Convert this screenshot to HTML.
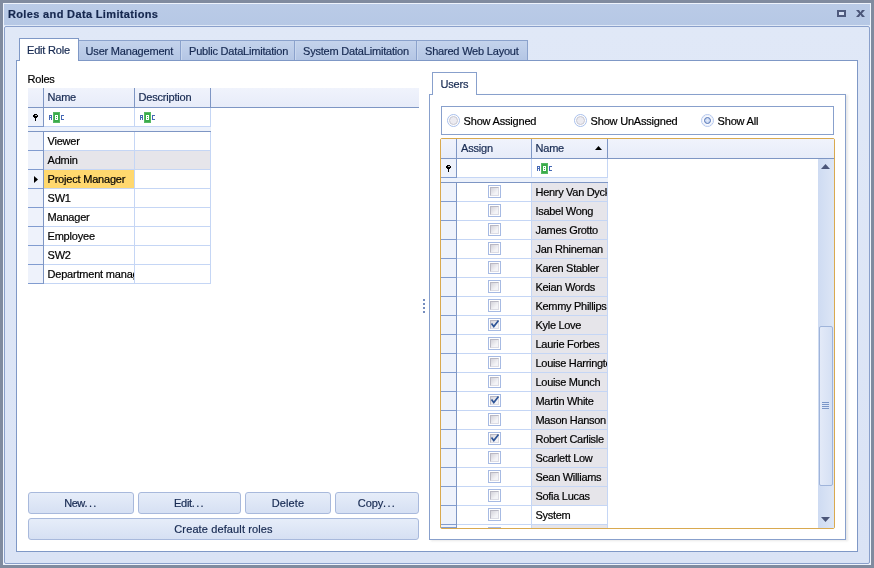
<!DOCTYPE html><html><head><meta charset="utf-8"><title>Roles and Data Limitations</title><style>
html,body{margin:0;padding:0;}
body{width:874px;height:568px;overflow:hidden;background:#808b9f;position:relative;font-family:"Liberation Sans",sans-serif;font-size:11px;color:#000;-webkit-text-stroke:0.2px;}
div{position:absolute;box-sizing:border-box;}
.t{white-space:nowrap;line-height:13px;height:13px;letter-spacing:-0.2px;}
.n{color:#172a52;}
.hdr{background:linear-gradient(#f0f3fc,#e7ecf9);}
.ind{background:#eef2fb;border-bottom:1px solid #819cd0;}
.cell{border-right:1px solid #c5d6f5;border-bottom:1px solid #c5d6f5;background:#fff;overflow:hidden;}
.g{background:#e6e5ea;}
.btn{border:1px solid #a8b9dc;border-radius:3px;background:linear-gradient(#e6edf9,#d6e0f3);text-align:center;line-height:20px;color:#172a52;letter-spacing:-0.2px;}
.cb{width:13px;height:13px;border:1px solid #a6bae3;background:#fff;}
.cb i{position:absolute;left:1px;top:1px;width:9px;height:9px;background:linear-gradient(135deg,#d4d3da,#f4f4f7 70%);border-top:1px solid #b9b8c3;border-left:1px solid #b9b8c3;border-right:1px solid #dcdce4;border-bottom:1px solid #dcdce4;box-sizing:border-box;}
.rd{width:13px;height:13px;border-radius:50%;border:1px solid #a9bde6;background:#fff;}
.rd i{position:absolute;left:1px;top:1px;width:9px;height:9px;border-radius:50%;background:radial-gradient(circle at 60% 60%,#f3f2f6,#dcdbe2);border:1px solid #c3c2cd;box-sizing:border-box;}
svg{position:absolute;overflow:visible;}
</style></head><body><div id="w" style="left:0;top:0;width:874px;height:568px;will-change:transform;">
<div style="left:3px;top:3px;width:868px;height:562px;background:#eef3fc;"></div>
<div style="left:4px;top:4px;width:866px;height:22px;background:linear-gradient(#bacbe7,#b6c8e5);"></div>
<div style="left:4px;top:25px;width:866px;height:1px;background:#dfe8f6;"></div>
<div class="t" style="left:8px;top:8px;font-weight:bold;color:#15274e;letter-spacing:0.35px;">Roles and Data Limitations</div>
<div style="left:837px;top:10px;width:9px;height:7px;border:2px solid #4e5a7d;background:#d3def2;"></div>
<svg style="left:856px;top:10px" width="9" height="7" viewBox="0 0 9 7"><path d="M0 0h3l1.5 2.2L6 0h3L5.9 3.5 9 7H6L4.5 4.8 3 7H0l3.1-3.5z" fill="#4b5679"/></svg>
<div style="left:4px;top:26px;width:866px;height:538px;background:linear-gradient(#e0e8f7,#dae3f5);border:1px solid #8aa0cb;border-radius:2px;"></div>
<div style="left:79px;top:40px;width:449px;height:21px;background:linear-gradient(#c4d3ec,#b3c5e4);border-top:1px solid #8ba2cc;border-right:1px solid #8ba2cc;"></div>
<div style="left:180px;top:41px;width:1px;height:19px;background:#8ba2cc;"></div>
<div style="left:181px;top:41px;width:1px;height:19px;background:#c9d7ee;"></div>
<div class="t n" style="left:85.6px;top:45px;">User Management</div>
<div style="left:294px;top:41px;width:1px;height:19px;background:#8ba2cc;"></div>
<div style="left:295px;top:41px;width:1px;height:19px;background:#c9d7ee;"></div>
<div class="t n" style="left:189px;top:45px;">Public DataLimitation</div>
<div style="left:416px;top:41px;width:1px;height:19px;background:#8ba2cc;"></div>
<div style="left:417px;top:41px;width:1px;height:19px;background:#c9d7ee;"></div>
<div class="t n" style="left:303px;top:45px;">System DataLimitation</div>
<div class="t n" style="left:425px;top:45px;">Shared Web Layout</div>
<div style="left:16px;top:60px;width:842px;height:492px;background:#fff;border:1px solid #7f98c6;"></div>
<div style="left:19px;top:38px;width:60px;height:23px;background:#fff;border:1px solid #7f98c6;border-bottom:none;"></div>
<div class="t n" style="left:27px;top:44px;">Edit Role</div>
<div class="t" style="left:27.5px;top:73px;">Roles</div>
<div class="hdr" style="left:28px;top:88px;width:391px;height:19px;"></div>
<div style="left:28px;top:107px;width:391px;height:1px;background:#7e96c4;"></div>
<div style="left:43px;top:88px;width:1px;height:19px;background:#7e96c4;"></div>
<div style="left:134px;top:88px;width:1px;height:19px;background:#7e96c4;"></div>
<div style="left:210px;top:88px;width:1px;height:19px;background:#7e96c4;"></div>
<div class="t n" style="left:47.5px;top:91px;">Name</div>
<div class="t n" style="left:138.5px;top:91px;">Description</div>
<div class="ind" style="left:28px;top:108px;width:15px;height:19px;"></div>
<div style="left:43px;top:108px;width:1px;height:19px;background:#7e96c4;"></div>
<div class="cell" style="left:44px;top:108px;width:91px;height:19px;"></div>
<div class="cell" style="left:135px;top:108px;width:76px;height:19px;"></div>
<div style="left:28px;top:127px;width:183px;height:4px;background:#edf2fb;"></div>
<div style="left:28px;top:131px;width:183px;height:1px;background:#7e96c4;"></div>
<svg style="left:33px;top:114px" width="5" height="7" viewBox="0 0 5 7" shape-rendering="crispEdges"><path d="M1 0h3v1h1v2h-1v1h-1v3h-1v-3h-1v-1h-1v-2h1z" fill="#000"/><rect x="2" y="1" width="2" height="1" fill="#bbb"/></svg>
<svg style="left:49px;top:112px" width="15" height="11" viewBox="0 0 15 11" shape-rendering="crispEdges"><rect x="4" y="0" width="7" height="11" fill="#3aab4a"/><rect x="4.5" y="0.5" width="6" height="10" fill="none" stroke="#56b964" stroke-width="1" shape-rendering="auto"/><path d="M0 3h3v5h-1v-2h-1v2h-1zM1 4v1h1v-1z" fill="#4668b4"/><path d="M6 3h3v5h-3zM7 4v1h1v-1zM7 6v1h1v-1z" fill="#fff" fill-rule="evenodd"/><path d="M12 3h3v1h-2v3h2v1h-3z" fill="#4668b4"/></svg>
<svg style="left:140px;top:112px" width="15" height="11" viewBox="0 0 15 11" shape-rendering="crispEdges"><rect x="4" y="0" width="7" height="11" fill="#3aab4a"/><rect x="4.5" y="0.5" width="6" height="10" fill="none" stroke="#56b964" stroke-width="1" shape-rendering="auto"/><path d="M0 3h3v5h-1v-2h-1v2h-1zM1 4v1h1v-1z" fill="#4668b4"/><path d="M6 3h3v5h-3zM7 4v1h1v-1zM7 6v1h1v-1z" fill="#fff" fill-rule="evenodd"/><path d="M12 3h3v1h-2v3h2v1h-3z" fill="#4668b4"/></svg>
<div class="ind" style="left:28px;top:132px;width:15px;height:19px;"></div>
<div style="left:43px;top:132px;width:1px;height:19px;background:#7e96c4;"></div>
<div class="cell" style="left:44px;top:132px;width:91px;height:19px;"><div class="t" style="left:3.5px;top:3px">Viewer</div></div>
<div class="cell" style="left:135px;top:132px;width:76px;height:19px;"></div>
<div class="ind" style="left:28px;top:151px;width:15px;height:19px;"></div>
<div style="left:43px;top:151px;width:1px;height:19px;background:#7e96c4;"></div>
<div class="cell g" style="left:44px;top:151px;width:91px;height:19px;"><div class="t" style="left:3.5px;top:3px">Admin</div></div>
<div class="cell g" style="left:135px;top:151px;width:76px;height:19px;"></div>
<div class="ind" style="left:28px;top:170px;width:15px;height:19px;"></div>
<div style="left:43px;top:170px;width:1px;height:19px;background:#7e96c4;"></div>
<div class="cell" style="left:44px;top:170px;width:91px;height:19px;background:#ffd86e;"><div class="t" style="left:3.5px;top:3px">Project Manager</div></div>
<div class="cell" style="left:135px;top:170px;width:76px;height:19px;"></div>
<div class="ind" style="left:28px;top:189px;width:15px;height:19px;"></div>
<div style="left:43px;top:189px;width:1px;height:19px;background:#7e96c4;"></div>
<div class="cell" style="left:44px;top:189px;width:91px;height:19px;"><div class="t" style="left:3.5px;top:3px">SW1</div></div>
<div class="cell" style="left:135px;top:189px;width:76px;height:19px;"></div>
<div class="ind" style="left:28px;top:208px;width:15px;height:19px;"></div>
<div style="left:43px;top:208px;width:1px;height:19px;background:#7e96c4;"></div>
<div class="cell" style="left:44px;top:208px;width:91px;height:19px;"><div class="t" style="left:3.5px;top:3px">Manager</div></div>
<div class="cell" style="left:135px;top:208px;width:76px;height:19px;"></div>
<div class="ind" style="left:28px;top:227px;width:15px;height:19px;"></div>
<div style="left:43px;top:227px;width:1px;height:19px;background:#7e96c4;"></div>
<div class="cell" style="left:44px;top:227px;width:91px;height:19px;"><div class="t" style="left:3.5px;top:3px">Employee</div></div>
<div class="cell" style="left:135px;top:227px;width:76px;height:19px;"></div>
<div class="ind" style="left:28px;top:246px;width:15px;height:19px;"></div>
<div style="left:43px;top:246px;width:1px;height:19px;background:#7e96c4;"></div>
<div class="cell" style="left:44px;top:246px;width:91px;height:19px;"><div class="t" style="left:3.5px;top:3px">SW2</div></div>
<div class="cell" style="left:135px;top:246px;width:76px;height:19px;"></div>
<div class="ind" style="left:28px;top:265px;width:15px;height:19px;"></div>
<div style="left:43px;top:265px;width:1px;height:19px;background:#7e96c4;"></div>
<div class="cell" style="left:44px;top:265px;width:91px;height:19px;"><div class="t" style="left:3.5px;top:3px">Department manager</div></div>
<div class="cell" style="left:135px;top:265px;width:76px;height:19px;"></div>
<svg style="left:34px;top:176px" width="4" height="7" viewBox="0 0 4 7"><path d="M0 0l4 3.5L0 7z" fill="#000"/></svg>
<div class="btn" style="left:28px;top:492px;width:106px;height:22px;"><span style="letter-spacing:-0.6px">New</span><span style="letter-spacing:1.3px">...</span></div>
<div class="btn" style="left:138px;top:492px;width:103px;height:22px;"><span style="letter-spacing:-0.3px">Edit</span><span style="letter-spacing:1.3px">...</span></div>
<div class="btn" style="left:245px;top:492px;width:86px;height:22px;"><span style="letter-spacing:0.1px">Delete</span></div>
<div class="btn" style="left:335px;top:492px;width:84px;height:22px;"><span style="letter-spacing:-0.1px">Copy</span><span style="letter-spacing:1.3px">...</span></div>
<div class="btn" style="left:28px;top:518px;width:391px;height:22px;letter-spacing:0.12px;">Create default roles</div>
<div style="left:423px;top:299px;width:2px;height:2px;background:#758dbe;"></div>
<div style="left:423px;top:303px;width:2px;height:2px;background:#758dbe;"></div>
<div style="left:423px;top:307px;width:2px;height:2px;background:#758dbe;"></div>
<div style="left:423px;top:311px;width:2px;height:2px;background:#758dbe;"></div>
<div style="left:429px;top:94px;width:417px;height:446px;background:#fff;border:1px solid #88a0cc;box-shadow:2px 1px 2px rgba(120,120,120,0.18);"></div>
<div style="left:432px;top:72px;width:45px;height:23px;background:#fff;border:1px solid #88a0cc;border-bottom:none;"></div>
<div class="t n" style="left:440.5px;top:78px;">Users</div>
<div style="left:441px;top:106px;width:393px;height:29px;border:1px solid #88a0cc;background:#fff;"></div>
<svg style="left:447px;top:114px" width="13" height="13" viewBox="0 0 13 13"><circle cx="6.5" cy="6.5" r="6" fill="#fff" stroke="#a9c0ec"/><circle cx="6.5" cy="6.5" r="4" fill="#ecebf1" stroke="#c6c6d0"/></svg>
<div class="t" style="left:463.6px;top:115px;">Show Assigned</div>
<svg style="left:574px;top:114px" width="13" height="13" viewBox="0 0 13 13"><circle cx="6.5" cy="6.5" r="6" fill="#fff" stroke="#a9c0ec"/><circle cx="6.5" cy="6.5" r="4" fill="#ecebf1" stroke="#c6c6d0"/></svg>
<div class="t" style="left:590.6px;top:115px;">Show UnAssigned</div>
<svg style="left:701px;top:114px" width="13" height="13" viewBox="0 0 13 13"><defs><radialGradient id="rg"><stop offset="0" stop-color="#e6eefb"/><stop offset="1" stop-color="#bccdee"/></radialGradient></defs><circle cx="6.5" cy="6.5" r="6" fill="#fff" stroke="#b5c8ee"/><circle cx="6.5" cy="6.5" r="5" fill="none" stroke="#e6ecfa"/><circle cx="6.5" cy="6.5" r="3" fill="url(#rg)" stroke="#5777b6"/></svg>
<div class="t" style="left:717.6px;top:115px;">Show All</div>
<div style="left:440px;top:138px;width:395px;height:391px;border:1px solid #d9a94f;background:#fff;border-radius:2px;"></div>
<div class="hdr" style="left:441px;top:139px;width:393px;height:19px;"></div>
<div style="left:441px;top:158px;width:393px;height:1px;background:#7e96c4;"></div>
<div style="left:456px;top:139px;width:1px;height:19px;background:#7e96c4;"></div>
<div style="left:531px;top:139px;width:1px;height:19px;background:#7e96c4;"></div>
<div style="left:607px;top:139px;width:1px;height:19px;background:#7e96c4;"></div>
<div class="t n" style="left:461px;top:142px;">Assign</div>
<div class="t n" style="left:535.5px;top:142px;">Name</div>
<svg style="left:595px;top:146px" width="7" height="4" viewBox="0 0 7 4"><path d="M0 4L3.5 0 7 4z" fill="#000"/></svg>
<div class="ind" style="left:441px;top:159px;width:15px;height:19px;"></div>
<div style="left:456px;top:159px;width:1px;height:19px;background:#7e96c4;"></div>
<div class="cell" style="left:457px;top:159px;width:75px;height:19px;"></div>
<div class="cell" style="left:532px;top:159px;width:76px;height:19px;"></div>
<svg style="left:446px;top:165px" width="5" height="7" viewBox="0 0 5 7" shape-rendering="crispEdges"><path d="M1 0h3v1h1v2h-1v1h-1v3h-1v-3h-1v-1h-1v-2h1z" fill="#000"/><rect x="2" y="1" width="2" height="1" fill="#bbb"/></svg>
<svg style="left:537px;top:163px" width="15" height="11" viewBox="0 0 15 11" shape-rendering="crispEdges"><rect x="4" y="0" width="7" height="11" fill="#3aab4a"/><rect x="4.5" y="0.5" width="6" height="10" fill="none" stroke="#56b964" stroke-width="1" shape-rendering="auto"/><path d="M0 3h3v5h-1v-2h-1v2h-1zM1 4v1h1v-1z" fill="#4668b4"/><path d="M6 3h3v5h-3zM7 4v1h1v-1zM7 6v1h1v-1z" fill="#fff" fill-rule="evenodd"/><path d="M12 3h3v1h-2v3h2v1h-3z" fill="#4668b4"/></svg>
<div style="left:441px;top:178px;width:167px;height:4px;background:#edf2fb;"></div>
<div style="left:441px;top:182px;width:167px;height:1px;background:#7e96c4;"></div>
<div class="ind" style="left:441px;top:183px;width:15px;height:19px;"></div>
<div style="left:456px;top:183px;width:1px;height:19px;background:#7e96c4;"></div>
<div class="cell" style="left:457px;top:183px;width:75px;height:19px;"><div class="cb" style="left:31px;top:2px"><i></i></div></div>
<div class="cell g" style="left:532px;top:183px;width:76px;height:19px;"><div class="t" style="left:3.5px;top:3px;letter-spacing:-0.3px">Henry Van Dyck</div></div>
<div class="ind" style="left:441px;top:202px;width:15px;height:19px;"></div>
<div style="left:456px;top:202px;width:1px;height:19px;background:#7e96c4;"></div>
<div class="cell" style="left:457px;top:202px;width:75px;height:19px;"><div class="cb" style="left:31px;top:2px"><i></i></div></div>
<div class="cell g" style="left:532px;top:202px;width:76px;height:19px;"><div class="t" style="left:3.5px;top:3px;letter-spacing:-0.3px">Isabel Wong</div></div>
<div class="ind" style="left:441px;top:221px;width:15px;height:19px;"></div>
<div style="left:456px;top:221px;width:1px;height:19px;background:#7e96c4;"></div>
<div class="cell" style="left:457px;top:221px;width:75px;height:19px;"><div class="cb" style="left:31px;top:2px"><i></i></div></div>
<div class="cell g" style="left:532px;top:221px;width:76px;height:19px;"><div class="t" style="left:3.5px;top:3px;letter-spacing:-0.3px">James Grotto</div></div>
<div class="ind" style="left:441px;top:240px;width:15px;height:19px;"></div>
<div style="left:456px;top:240px;width:1px;height:19px;background:#7e96c4;"></div>
<div class="cell" style="left:457px;top:240px;width:75px;height:19px;"><div class="cb" style="left:31px;top:2px"><i></i></div></div>
<div class="cell g" style="left:532px;top:240px;width:76px;height:19px;"><div class="t" style="left:3.5px;top:3px;letter-spacing:-0.3px">Jan Rhineman</div></div>
<div class="ind" style="left:441px;top:259px;width:15px;height:19px;"></div>
<div style="left:456px;top:259px;width:1px;height:19px;background:#7e96c4;"></div>
<div class="cell" style="left:457px;top:259px;width:75px;height:19px;"><div class="cb" style="left:31px;top:2px"><i></i></div></div>
<div class="cell g" style="left:532px;top:259px;width:76px;height:19px;"><div class="t" style="left:3.5px;top:3px;letter-spacing:-0.3px">Karen Stabler</div></div>
<div class="ind" style="left:441px;top:278px;width:15px;height:19px;"></div>
<div style="left:456px;top:278px;width:1px;height:19px;background:#7e96c4;"></div>
<div class="cell" style="left:457px;top:278px;width:75px;height:19px;"><div class="cb" style="left:31px;top:2px"><i></i></div></div>
<div class="cell g" style="left:532px;top:278px;width:76px;height:19px;"><div class="t" style="left:3.5px;top:3px;letter-spacing:-0.3px">Keian Words</div></div>
<div class="ind" style="left:441px;top:297px;width:15px;height:19px;"></div>
<div style="left:456px;top:297px;width:1px;height:19px;background:#7e96c4;"></div>
<div class="cell" style="left:457px;top:297px;width:75px;height:19px;"><div class="cb" style="left:31px;top:2px"><i></i></div></div>
<div class="cell g" style="left:532px;top:297px;width:76px;height:19px;"><div class="t" style="left:3.5px;top:3px;letter-spacing:-0.3px">Kemmy Phillips</div></div>
<div class="ind" style="left:441px;top:316px;width:15px;height:19px;"></div>
<div style="left:456px;top:316px;width:1px;height:19px;background:#7e96c4;"></div>
<div class="cell" style="left:457px;top:316px;width:75px;height:19px;"><div class="cb" style="left:31px;top:2px"><i></i><svg style="left:2px;top:1.4px" width="8" height="8" viewBox="0 0 8 8"><path d="M0.5 3.5L2.8 6.5 7.5 0.5" stroke="#2f5597" stroke-width="1.7" fill="none"/></svg></div></div>
<div class="cell g" style="left:532px;top:316px;width:76px;height:19px;"><div class="t" style="left:3.5px;top:3px;letter-spacing:-0.3px">Kyle Love</div></div>
<div class="ind" style="left:441px;top:335px;width:15px;height:19px;"></div>
<div style="left:456px;top:335px;width:1px;height:19px;background:#7e96c4;"></div>
<div class="cell" style="left:457px;top:335px;width:75px;height:19px;"><div class="cb" style="left:31px;top:2px"><i></i></div></div>
<div class="cell g" style="left:532px;top:335px;width:76px;height:19px;"><div class="t" style="left:3.5px;top:3px;letter-spacing:-0.3px">Laurie Forbes</div></div>
<div class="ind" style="left:441px;top:354px;width:15px;height:19px;"></div>
<div style="left:456px;top:354px;width:1px;height:19px;background:#7e96c4;"></div>
<div class="cell" style="left:457px;top:354px;width:75px;height:19px;"><div class="cb" style="left:31px;top:2px"><i></i></div></div>
<div class="cell g" style="left:532px;top:354px;width:76px;height:19px;"><div class="t" style="left:3.5px;top:3px;letter-spacing:-0.3px">Louise Harrington</div></div>
<div class="ind" style="left:441px;top:373px;width:15px;height:19px;"></div>
<div style="left:456px;top:373px;width:1px;height:19px;background:#7e96c4;"></div>
<div class="cell" style="left:457px;top:373px;width:75px;height:19px;"><div class="cb" style="left:31px;top:2px"><i></i></div></div>
<div class="cell g" style="left:532px;top:373px;width:76px;height:19px;"><div class="t" style="left:3.5px;top:3px;letter-spacing:-0.3px">Louise Munch</div></div>
<div class="ind" style="left:441px;top:392px;width:15px;height:19px;"></div>
<div style="left:456px;top:392px;width:1px;height:19px;background:#7e96c4;"></div>
<div class="cell" style="left:457px;top:392px;width:75px;height:19px;"><div class="cb" style="left:31px;top:2px"><i></i><svg style="left:2px;top:1.4px" width="8" height="8" viewBox="0 0 8 8"><path d="M0.5 3.5L2.8 6.5 7.5 0.5" stroke="#2f5597" stroke-width="1.7" fill="none"/></svg></div></div>
<div class="cell g" style="left:532px;top:392px;width:76px;height:19px;"><div class="t" style="left:3.5px;top:3px;letter-spacing:-0.3px">Martin White</div></div>
<div class="ind" style="left:441px;top:411px;width:15px;height:19px;"></div>
<div style="left:456px;top:411px;width:1px;height:19px;background:#7e96c4;"></div>
<div class="cell" style="left:457px;top:411px;width:75px;height:19px;"><div class="cb" style="left:31px;top:2px"><i></i></div></div>
<div class="cell g" style="left:532px;top:411px;width:76px;height:19px;"><div class="t" style="left:3.5px;top:3px;letter-spacing:-0.3px">Mason Hanson</div></div>
<div class="ind" style="left:441px;top:430px;width:15px;height:19px;"></div>
<div style="left:456px;top:430px;width:1px;height:19px;background:#7e96c4;"></div>
<div class="cell" style="left:457px;top:430px;width:75px;height:19px;"><div class="cb" style="left:31px;top:2px"><i></i><svg style="left:2px;top:1.4px" width="8" height="8" viewBox="0 0 8 8"><path d="M0.5 3.5L2.8 6.5 7.5 0.5" stroke="#2f5597" stroke-width="1.7" fill="none"/></svg></div></div>
<div class="cell g" style="left:532px;top:430px;width:76px;height:19px;"><div class="t" style="left:3.5px;top:3px;letter-spacing:-0.3px">Robert Carlisle</div></div>
<div class="ind" style="left:441px;top:449px;width:15px;height:19px;"></div>
<div style="left:456px;top:449px;width:1px;height:19px;background:#7e96c4;"></div>
<div class="cell" style="left:457px;top:449px;width:75px;height:19px;"><div class="cb" style="left:31px;top:2px"><i></i></div></div>
<div class="cell g" style="left:532px;top:449px;width:76px;height:19px;"><div class="t" style="left:3.5px;top:3px;letter-spacing:-0.3px">Scarlett Low</div></div>
<div class="ind" style="left:441px;top:468px;width:15px;height:19px;"></div>
<div style="left:456px;top:468px;width:1px;height:19px;background:#7e96c4;"></div>
<div class="cell" style="left:457px;top:468px;width:75px;height:19px;"><div class="cb" style="left:31px;top:2px"><i></i></div></div>
<div class="cell g" style="left:532px;top:468px;width:76px;height:19px;"><div class="t" style="left:3.5px;top:3px;letter-spacing:-0.3px">Sean Williams</div></div>
<div class="ind" style="left:441px;top:487px;width:15px;height:19px;"></div>
<div style="left:456px;top:487px;width:1px;height:19px;background:#7e96c4;"></div>
<div class="cell" style="left:457px;top:487px;width:75px;height:19px;"><div class="cb" style="left:31px;top:2px"><i></i></div></div>
<div class="cell g" style="left:532px;top:487px;width:76px;height:19px;"><div class="t" style="left:3.5px;top:3px;letter-spacing:-0.3px">Sofia Lucas</div></div>
<div class="ind" style="left:441px;top:506px;width:15px;height:19px;"></div>
<div style="left:456px;top:506px;width:1px;height:19px;background:#7e96c4;"></div>
<div class="cell" style="left:457px;top:506px;width:75px;height:19px;"><div class="cb" style="left:31px;top:2px"><i></i></div></div>
<div class="cell" style="left:532px;top:506px;width:76px;height:19px;"><div class="t" style="left:3.5px;top:3px;letter-spacing:-0.3px">System</div></div>
<div class="ind" style="left:441px;top:525px;width:15px;height:3px;"></div>
<div style="left:456px;top:525px;width:1px;height:3px;background:#7e96c4;"></div>
<div class="cell" style="left:457px;top:525px;width:75px;height:3px;border-bottom:none;"><div class="cb" style="left:31px;top:2px"><i></i></div></div>
<div class="cell g" style="left:532px;top:525px;width:76px;height:3px;border-bottom:none;"><div class="t" style="left:3.5px;top:3px;letter-spacing:-0.3px"></div></div>
<div style="left:818px;top:159px;width:16px;height:369px;background:linear-gradient(90deg,#cedbf2,#dde6f6);"></div>
<svg style="left:821px;top:164px" width="9" height="5" viewBox="0 0 9 5"><path d="M0 5L4.5 0 9 5z" fill="#4b5679"/></svg>
<svg style="left:821px;top:517px" width="9" height="5" viewBox="0 0 9 5"><path d="M0 0L4.5 5 9 0z" fill="#4b5679"/></svg>
<div style="left:819px;top:326px;width:14px;height:160px;background:linear-gradient(90deg,#e3eaf8,#d5e0f4);border:1px solid #9fb4da;border-radius:2px;"></div>
<div style="left:822px;top:402px;width:7px;height:1px;background:#7a96c8;"></div>
<div style="left:822px;top:404px;width:7px;height:1px;background:#7a96c8;"></div>
<div style="left:822px;top:406px;width:7px;height:1px;background:#7a96c8;"></div>
<div style="left:822px;top:408px;width:7px;height:1px;background:#7a96c8;"></div>
</div></body></html>
